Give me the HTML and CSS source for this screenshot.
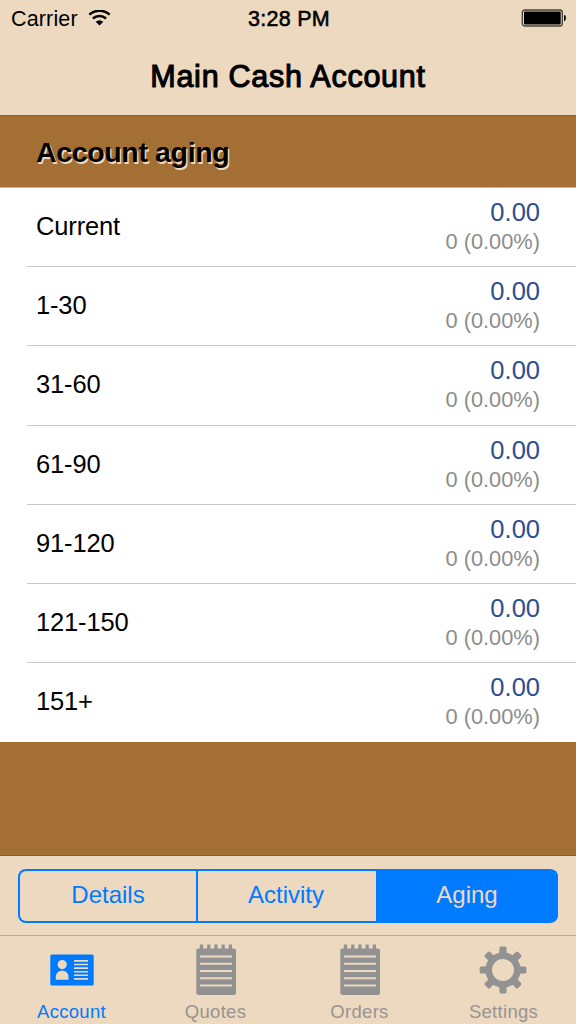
FILE: index.html
```html
<!DOCTYPE html>
<html lang="en">
<head>
<meta charset="utf-8">
<title>Main Cash Account</title>
<link rel="stylesheet" href="styles.css">
</head>
<body>
<header class="top">
  <div class="status">
    <div class="carrier"><span>Carrier</span>
      <svg width="24" height="18" viewBox="0 0 24 18"><g fill="none" stroke="#000" stroke-width="2.5"><path d="M1.300 4.700a15 15 0 0 1 20.400 0"/><path d="M4.900 8.500a9.700 9.700 0 0 1 13.200 0"/></g><path d="M7.700 11.700q3.800-3 7.600 0l-3.800 3.800z"/></svg>
    </div>
    <div class="time">3:28 PM</div>
    <div class="power">
      <svg width="46" height="20" viewBox="0 0 46 20"><rect x="1.3" y="1" width="40" height="16" rx="2.6" fill="none" stroke="#463f38" stroke-width="1.3"/><rect x="3" y="2.600" width="36.7" height="12.8" rx="1"/><path d="M43 5.800q2 .4 2 3.300t-2 3.300z"/></svg>
    </div>
  </div>
  <h1 class="title">Main Cash Account</h1>
</header>
<main class="content">
  <h2 class="section">Account aging</h2>
  <ul class="list">
    <li class="row"><span class="name">Current</span><span class="values"><b>0.00</b><small>0 (0.00%)</small></span></li>
    <li class="row"><span class="name">1-30</span><span class="values"><b>0.00</b><small>0 (0.00%)</small></span></li>
    <li class="row"><span class="name">31-60</span><span class="values"><b>0.00</b><small>0 (0.00%)</small></span></li>
    <li class="row"><span class="name">61-90</span><span class="values"><b>0.00</b><small>0 (0.00%)</small></span></li>
    <li class="row"><span class="name">91-120</span><span class="values"><b>0.00</b><small>0 (0.00%)</small></span></li>
    <li class="row"><span class="name">121-150</span><span class="values"><b>0.00</b><small>0 (0.00%)</small></span></li>
    <li class="row"><span class="name">151+</span><span class="values"><b>0.00</b><small>0 (0.00%)</small></span></li>
  </ul>
</main>
<div class="toolbar">
  <div class="segments">
    <div class="segment">Details</div>
    <div class="segment">Activity</div>
    <div class="segment selected">Aging</div>
  </div>
</div>
<nav class="tabs">
  <div class="tab active">
    <svg width="56" height="56" viewBox="0 0 56 56"><rect x="6.300" y="12.500" width="43.400" height="31" rx="1.500" fill="#007aff"/><g fill="#ecd9c0"><circle cx="18.200" cy="22.600" r="4.600"/><path d="M11.800 37.700v-2.400q0-6.200 6.400-6.900 6.300.7 6.300 6.900v2.400z"/></g><path d="M30 18.900h14M30 22.500h14M30 26.100h14M30 29.700h14M30 33.300h14M30 36.900h14" stroke="#ecd9c0" stroke-width="1.600"/></svg>
    <span>Account</span>
  </div>
  <div class="tab">
    <svg width="56" height="56" viewBox="0 0 56 56"><path fill="#929292" d="M10.300 6.500h1.600v-4h3.300v4h3.900v-4h3.300v4h3.900v-4h3.300v4h3.900v-4h3.300v4h3.900v-4h3.300v4h2q2 0 2 2v42.500q0 2-2 2h-35.700q-2 0-2-2v-42.500q0-2 2-2z"/><path d="M12 14.500h32M12 21.800h32M12 29h32M12 36.200h32M12 43.500h32" stroke="#ecd9c0" stroke-width="2"/></svg>
    <span>Quotes</span>
  </div>
  <div class="tab">
    <svg width="56" height="56" viewBox="0 0 56 56"><path fill="#929292" d="M10.300 6.500h1.600v-4h3.300v4h3.900v-4h3.300v4h3.900v-4h3.300v4h3.900v-4h3.300v4h3.900v-4h3.300v4h2q2 0 2 2v42.500q0 2-2 2h-35.700q-2 0-2-2v-42.500q0-2 2-2z"/><path d="M12 14.500h32M12 21.800h32M12 29h32M12 36.200h32M12 43.500h32" stroke="#ecd9c0" stroke-width="2"/></svg>
    <span>Orders</span>
  </div>
  <div class="tab">
    <svg width="56" height="56" viewBox="0 0 56 56"><defs><path id="tooth" d="M21.500 13q2.900-1 2.900-3V6.200q0-1.600 1.600-1.600h4q1.600 0 1.600 1.600V10q0 2 2.900 3z"/></defs><g fill="#929292" transform="translate(-1 0)"><circle cx="28" cy="28" r="14.300" fill="none" stroke="#929292" stroke-width="6.600"/><use href="#tooth"/><use href="#tooth" transform="rotate(45 28 28)"/><use href="#tooth" transform="rotate(90 28 28)"/><use href="#tooth" transform="rotate(135 28 28)"/><use href="#tooth" transform="rotate(180 28 28)"/><use href="#tooth" transform="rotate(225 28 28)"/><use href="#tooth" transform="rotate(270 28 28)"/><use href="#tooth" transform="rotate(315 28 28)"/></g></svg>
    <span>Settings</span>
  </div>
</nav>
</body>
</html>
```
FILE: styles.css
```css
* { box-sizing: border-box; }
body {
  margin: 0;
  width: 576px;
  height: 1024px;
  display: flex;
  flex-direction: column;
  overflow: hidden;
  background: #a46f34;
  color: #000;
  font-family: "Liberation Sans", Arial, sans-serif;
}
svg { display: block; flex: none; }
.top {
  height: 116px;
  background: #ecd9c0;
  border-bottom: 1px solid #87602f;
}
.status {
  height: 38px;
  padding: 0 9px 0 11px;
  display: grid;
  grid-template-columns: 1fr auto 1fr;
  align-items: center;
  font-size: 21.5px;
  letter-spacing: 0.15px;
}
.carrier { display: flex; align-items: center; gap: 10px; }
.time { letter-spacing: 0.3px; -webkit-text-stroke: 0.55px #000; }
.power { display: flex; justify-content: flex-end; }
.title {
  margin: 0;
  line-height: 76px;
  text-align: center;
  font-size: 30.5px;
  font-weight: 400;
  letter-spacing: 0.75px;
  -webkit-text-stroke: 1.1px #000;
}
.content { flex: 1; }
.section {
  margin: 0;
  height: 71px;
  padding-left: 36px;
  line-height: 73px;
  font-size: 28.5px;
  font-weight: 700;
  letter-spacing: -0.35px;
  text-shadow: 1.5px 1.5px 0 #ecd9c0;
}
.list {
  margin: 0;
  padding: 0;
  list-style: none;
  background: #fff;
  border-top: 1px solid #c9b498;
}
.row {
  height: 79.2px;
  margin-left: 27px;
  padding: 0 36px 0 9px;
  display: flex;
  justify-content: space-between;
  align-items: center;
  border-bottom: 1px solid #c8c7cc;
}
.row:last-child { border-bottom-color: transparent; }
.name { font-size: 25.5px; letter-spacing: -0.15px; padding-bottom: 1px; }
.values { display: flex; flex-direction: column; align-items: flex-end; }
.values b { font-size: 25.5px; line-height: 30px; font-weight: 400; color: #2e4e8f; }
.values small { font-size: 21.8px; line-height: 30px; color: #8c8c8c; }
.toolbar {
  height: 80px;
  padding: 13px 18px 0;
  background: #ecd9c0;
  border-top: 1px solid #87602f;
}
.segments {
  height: 54px;
  display: grid;
  grid-template-columns: 178px 180px 182px;
  border-radius: 8px;
  overflow: hidden;
  background: #007aff;
  padding: 2px 0;
}
.segment {
  line-height: 48px;
  text-align: center;
  font-size: 24px;
  letter-spacing: 0;
  color: #007aff;
  margin-left: 2px;
  background: #ecd9c0;
}
.segment:first-child { border-radius: 6px 0 0 6px; }
.segment.selected { background: #007aff; color: #ecd9c0; }
.segment + .segment { padding-right: 2px; }
.tabs {
  height: 89px;
  display: grid;
  grid-template-columns: repeat(4, 1fr);
  background: #ecd9c0;
  border-top: 1px solid #b9aa96;
}
.tab {
  display: flex;
  flex-direction: column;
  align-items: center;
  padding-top: 6px;
  font-size: 18.5px;
  line-height: 28px;
  letter-spacing: 0.3px;
  color: #989490;
}
.tab span { margin-left: -1px; }
.tab.active { color: #007aff; }
```
